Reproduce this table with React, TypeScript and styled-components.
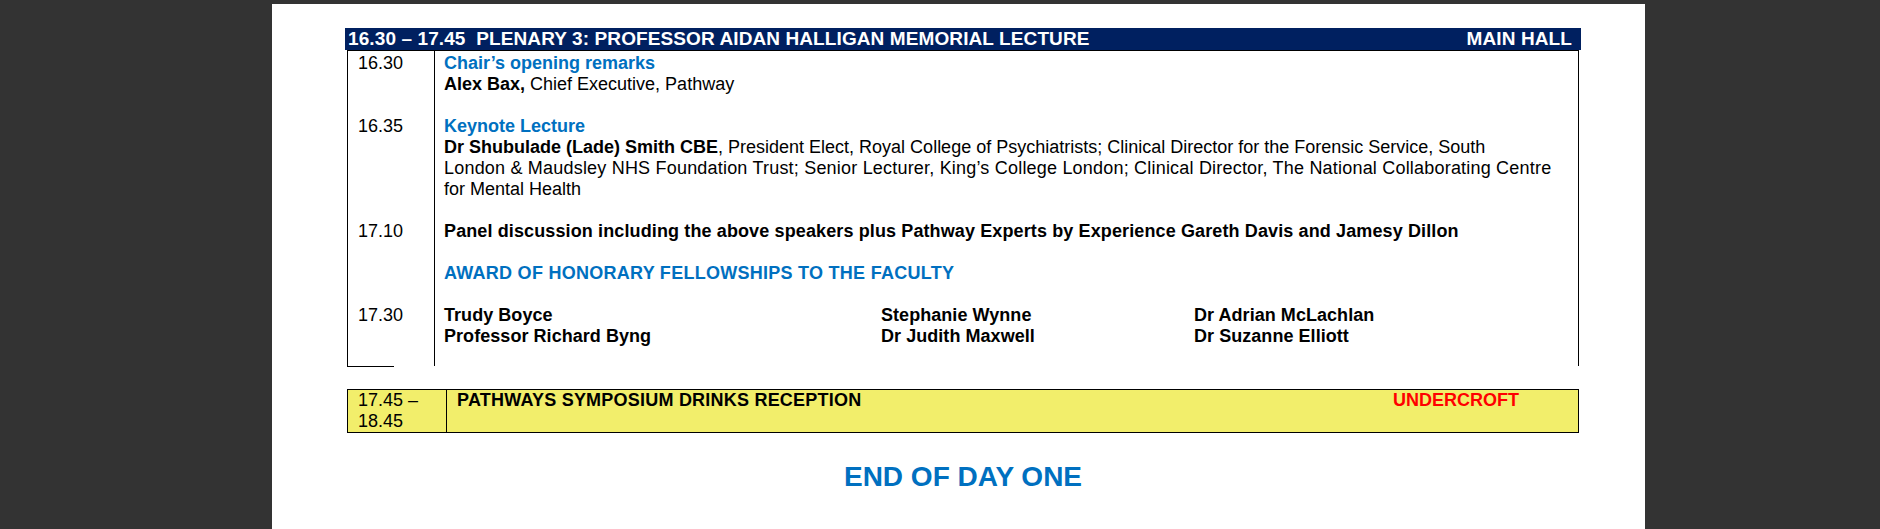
import React from "react";
import styled, { createGlobalStyle } from "styled-components";

const GlobalStyle = createGlobalStyle`
  html, body {
    margin: 0;
    padding: 0;
    background: #333333;
  }
  body {
    font-family: "Liberation Sans", Arial, sans-serif;
    color: #000;
  }
`;

const Viewer = styled.div`
  display: flex;
  padding: 4px 0 0 272px;
`;

const Page = styled.div`
  width: 1373px;
  min-height: 560px;
  background: #ffffff;
  box-sizing: border-box;
  padding: 24px 0 0 73px;
`;

const Schedule = styled.section`
  width: 1236px;
  display: flex;
  flex-direction: column;
`;

const Header = styled.header`
  height: 22px;
  background: #002060;
  color: #ffffff;
  font-weight: 700;
  font-size: 19px;
  letter-spacing: 0.1px;
  line-height: 22px;
  display: flex;
  justify-content: space-between;
  align-items: center;
  padding: 0 9px 0 3px;
  white-space: pre;
`;

const Table = styled.div`
  position: relative;
  margin: 0 2px;
  border: 1px solid #000;
  border-bottom: none;
  display: grid;
  grid-template-columns: 86px 1fr;
  font-size: 18px;
  line-height: 21px;

  &::after {
    content: "";
    position: absolute;
    left: -1px;
    bottom: -1px;
    width: 47px;
    height: 1px;
    background: #000;
  }
`;

const TimeCell = styled.div<{ $first?: boolean; $last?: boolean }>`
  padding: ${(p) => (p.$first ? "1.5px" : "0")} 0 ${(p) => (p.$last ? "19px" : "21px")} 10px;
`;

const ContentCell = styled.div<{ $first?: boolean; $last?: boolean }>`
  border-left: 1px solid #000;
  padding: ${(p) => (p.$first ? "1.5px" : "0")} 9px ${(p) => (p.$last ? "19px" : "21px")} 9px;
`;

const Title = styled.div<{ $blue?: boolean; $spacing?: number }>`
  font-weight: 700;
  color: ${(p) => (p.$blue ? "#0070c0" : "#000")};
  letter-spacing: ${(p) => p.$spacing ?? 0}px;
`;

const Line = styled.div``;

const Spaced = styled.span<{ $spacing: number }>`
  letter-spacing: ${(p) => p.$spacing}px;
`;

const Strong = styled.b`
  font-weight: 700;
`;

const NameGrid = styled.div`
  display: grid;
  grid-template-columns: 437px 313px 1fr;
  font-weight: 700;
  letter-spacing: 0.05px;
`;

const Reception = styled.div`
  margin: 23px 2px 0;
  border: 1px solid #000;
  background: #f2ee6b;
  display: grid;
  grid-template-columns: 98px 1fr;
  font-size: 18px;
  line-height: 21px;
`;

const ReceptionTime = styled.div`
  padding-left: 10px;
`;

const ReceptionBody = styled.div`
  border-left: 1px solid #000;
  padding: 0 59px 0 10px;
  display: flex;
  justify-content: space-between;
  align-items: flex-start;
  font-weight: 700;
  letter-spacing: 0.22px;
`;

const Venue = styled.span`
  color: #ff0000;
  letter-spacing: 0;
`;

const EndTitle = styled.h2`
  margin: 28px 0 0;
  text-align: center;
  font-size: 28px;
  line-height: 32px;
  font-weight: 700;
  color: #0070c0;
`;

const names = [
  ["Trudy Boyce", "Stephanie Wynne", "Dr Adrian McLachlan"],
  ["Professor Richard Byng", "Dr Judith Maxwell", "Dr Suzanne Elliott"],
];

export default function App() {
  return (
    <>
      <GlobalStyle />
      <Viewer>
        <Page>
          <Schedule>
            <Header>
              <span>{"16.30 – 17.45  PLENARY 3: PROFESSOR AIDAN HALLIGAN MEMORIAL LECTURE"}</span>
              <span>MAIN HALL</span>
            </Header>
            <Table>
              <TimeCell $first>16.30</TimeCell>
              <ContentCell $first>
                <Title $blue>Chair’s opening remarks</Title>
                <Line>
                  <Strong>Alex Bax,</Strong> Chief Executive, Pathway
                </Line>
              </ContentCell>

              <TimeCell>16.35</TimeCell>
              <ContentCell>
                <Title $blue>Keynote Lecture</Title>
                <Line>
                  <Strong>Dr Shubulade (Lade) Smith CBE</Strong>, President Elect, Royal College of
                  Psychiatrists; Clinical Director for the Forensic Service, South
                  <br />
                  <Spaced $spacing={0.2}>
                    London &amp; Maudsley NHS Foundation Trust; Senior Lecturer, King’s College
                    London; Clinical Director, The National Collaborating Centre
                  </Spaced>
                  <br />
                  for Mental Health
                </Line>
              </ContentCell>

              <TimeCell>17.10</TimeCell>
              <ContentCell>
                <Title $spacing={0.12}>
                  Panel discussion including the above speakers plus Pathway Experts by Experience
                  Gareth Davis and Jamesy Dillon
                </Title>
              </ContentCell>

              <TimeCell />
              <ContentCell>
                <Title $blue $spacing={0.27}>
                  AWARD OF HONORARY FELLOWSHIPS TO THE FACULTY
                </Title>
              </ContentCell>

              <TimeCell $last>17.30</TimeCell>
              <ContentCell $last>
                <NameGrid>
                  {names.flat().map((n) => (
                    <span key={n}>{n}</span>
                  ))}
                </NameGrid>
              </ContentCell>
            </Table>

            <Reception>
              <ReceptionTime>
                17.45 –
                <br />
                18.45
              </ReceptionTime>
              <ReceptionBody>
                <span>PATHWAYS SYMPOSIUM DRINKS RECEPTION</span>
                <Venue>UNDERCROFT</Venue>
              </ReceptionBody>
            </Reception>

            <EndTitle>END OF DAY ONE</EndTitle>
          </Schedule>
        </Page>
      </Viewer>
    </>
  );
}
